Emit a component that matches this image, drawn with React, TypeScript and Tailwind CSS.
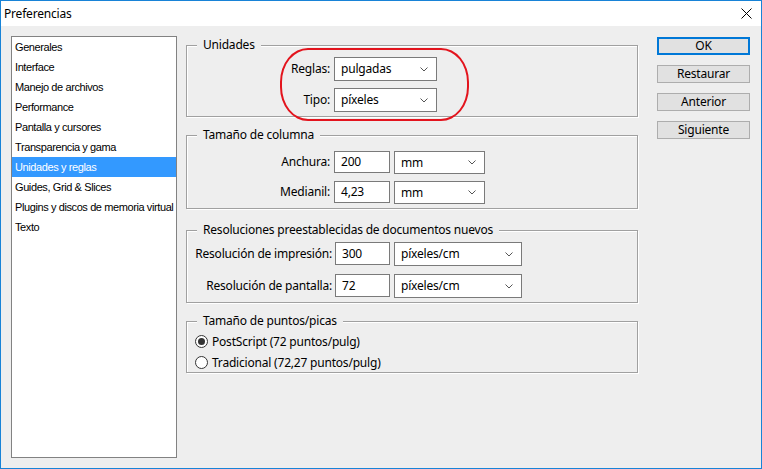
import React from "react";

const ui = '"Noto Sans", "Liberation Sans", sans-serif';
const listFont = '"Liberation Sans", Arial, sans-serif';

const items = [
  "Generales",
  "Interface",
  "Manejo de archivos",
  "Performance",
  "Pantalla y cursores",
  "Transparencia y gama",
  "Unidades y reglas",
  "Guides, Grid & Slices",
  "Plugins y discos de memoria virtual",
  "Texto",
];

function Chevron() {
  return (
    <svg width="8" height="5" viewBox="0 0 8 5" className="shrink-0">
      <path d="M0.5 0.5 L4 4 L7.5 0.5" fill="none" stroke="#555" strokeWidth="1" />
    </svg>
  );
}

function Select({ value, w, h }: { value: string; w: string; h: string }) {
  return (
    <div className={`${w} ${h} bg-white border border-[#7a7a7a] flex items-center justify-between pl-[6px] pr-[8px]`}>
      <span className="text-[12px] text-black leading-none">{value}</span>
      <Chevron />
    </div>
  );
}

function Input({ value, w, h }: { value: string; w: string; h: string }) {
  return (
    <div className={`${w} ${h} bg-white border border-[#7a7a7a] flex items-center pl-[6px]`}>
      <span className="text-[12px] text-black leading-none">{value}</span>
    </div>
  );
}

function Group({ title, className, children }: { title: string; className: string; children?: React.ReactNode }) {
  return (
    <div className={`relative border border-[#a0a0a0] shadow-[inset_1px_1px_0_#ffffff,1px_1px_0_#ffffff] ${className}`}>
      <span className="absolute left-[10px] -top-[9px] leading-[16px] px-[6px] bg-[#eeeeee] text-[12px] text-black whitespace-nowrap">
        {title}
      </span>
      {children}
    </div>
  );
}

function Radio({ checked, label }: { checked: boolean; label: string }) {
  return (
    <div className="h-[21px] flex items-center pl-[8px]">
      <div className="w-[13px] h-[13px] rounded-full border border-[#333333] bg-white flex items-center justify-center">
        {checked && <div className="w-[7px] h-[7px] rounded-full bg-[#333333]" />}
      </div>
      <span className="ml-[4px] text-[12px] text-black">{label}</span>
    </div>
  );
}

function Button({ label, primary }: { label: string; primary?: boolean }) {
  return (
    <div
      className={`w-[93px] h-[18px] bg-[#e1e1e1] flex items-center justify-center text-[12px] text-black ${
        primary ? "border-2 border-[#0078d7]" : "border border-[#adadad]"
      }`}
    >
      {label}
    </div>
  );
}

export default function App() {
  return (
    <div
      className="w-[762px] h-[469px] border border-[#1883d7] bg-[#eeeeee] flex flex-col overflow-hidden tracking-[-0.2px]"
      style={{ fontFamily: ui }}
    >
      <div className="h-[25px] bg-white flex items-center justify-between pl-[3px] pr-[9px] shrink-0">
        <span className="text-[12px] text-black">Preferencias</span>
        <svg width="11" height="11" viewBox="0 0 11 11">
          <path d="M0.5 0.5 L10.5 10.5 M10.5 0.5 L0.5 10.5" stroke="#000" strokeWidth="1" fill="none" />
        </svg>
      </div>

      <div className="flex pt-[10px] pl-[10px]">
        <div className="w-[166px] h-[422px] bg-white border border-[#828282] flex flex-col tracking-[-0.4px]" style={{ fontFamily: listFont }}>
          {items.map((it, i) => (
            <div
              key={it}
              className={`h-[20px] flex items-center pl-[3px] text-[11px] whitespace-nowrap ${
                i === 6 ? "bg-[#3399ff] text-white" : "text-black"
              }`}
            >
              {it}
            </div>
          ))}
        </div>

        <div className="ml-[9px] mt-[9px] w-[452px] flex flex-col">
          <Group title="Unidades" className="h-[72px] pt-[11px]">
            <div className="flex flex-col gap-[7px]">
              <div className="flex items-center">
                <div className="w-[147px] text-right text-[12px] text-black pr-[4px]">Reglas:</div>
                <Select value="pulgadas" w="w-[103px]" h="h-[24px]" />
              </div>
              <div className="flex items-center">
                <div className="w-[147px] text-right text-[12px] text-black pr-[4px]">Tipo:</div>
                <Select value="píxeles" w="w-[103px]" h="h-[24px]" />
              </div>
            </div>
            <div className="absolute left-[93px] top-[2px] w-[189px] h-[73px] border-2 border-[#e3141d] rounded-[28px/34px] pointer-events-none" />
          </Group>

          <Group title="Tamaño de columna" className="mt-[18px] h-[74px] pt-[15px]">
            <div className="flex flex-col gap-[7px]">
              <div className="flex items-start">
                <div className="w-[147px] h-[22px] flex items-center justify-end text-[12px] text-black pr-[4px]">Anchura:</div>
                <Input value="200" w="w-[56px]" h="h-[22px]" />
                <div className="ml-[4px]">
                  <Select value="mm" w="w-[91px]" h="h-[23px]" />
                </div>
              </div>
              <div className="flex items-start">
                <div className="w-[147px] h-[22px] flex items-center justify-end text-[12px] text-black pr-[4px]">Medianil:</div>
                <Input value="4,23" w="w-[56px]" h="h-[22px]" />
                <div className="ml-[4px]">
                  <Select value="mm" w="w-[91px]" h="h-[23px]" />
                </div>
              </div>
            </div>
          </Group>

          <Group title="Resoluciones preestablecidas de documentos nuevos" className="mt-[21px] h-[73px] pt-[11px]">
            <div className="flex flex-col gap-[8px]">
              <div className="flex items-start">
                <div className="w-[148px] h-[23px] flex items-center justify-end text-[12px] text-black pr-[3px] whitespace-nowrap">
                  Resolución de impresión:
                </div>
                <Input value="300" w="w-[55px]" h="h-[23px]" />
                <div className="ml-[4px]">
                  <Select value="píxeles/cm" w="w-[128px]" h="h-[24px]" />
                </div>
              </div>
              <div className="flex items-start">
                <div className="w-[148px] h-[23px] flex items-center justify-end text-[12px] text-black pr-[3px] whitespace-nowrap">
                  Resolución de pantalla:
                </div>
                <Input value="72" w="w-[55px]" h="h-[23px]" />
                <div className="ml-[4px]">
                  <Select value="píxeles/cm" w="w-[128px]" h="h-[24px]" />
                </div>
              </div>
            </div>
          </Group>

          <Group title="Tamaño de puntos/picas" className="mt-[18px] h-[52px] pt-[9px]">
            <Radio checked label="PostScript (72 puntos/pulg)" />
            <Radio checked={false} label="Tradicional (72,27 puntos/pulg)" />
          </Group>
        </div>

        <div className="ml-[19px] mt-[1px] flex flex-col gap-[10px]">
          <Button label="OK" primary />
          <Button label="Restaurar" />
          <Button label="Anterior" />
          <Button label="Siguiente" />
        </div>
      </div>
    </div>
  );
}
